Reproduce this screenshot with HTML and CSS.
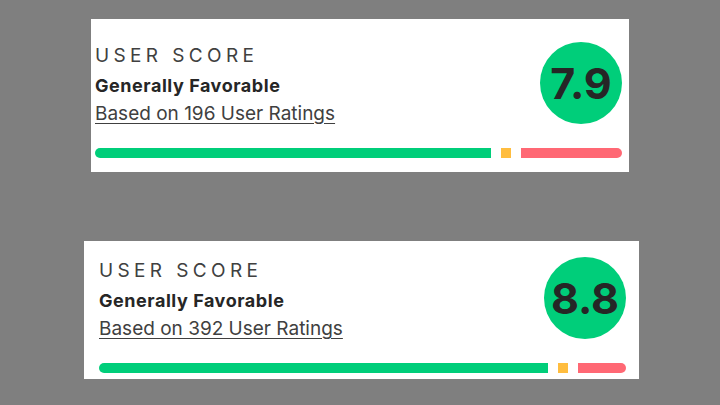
FILE: index.html
```html
<!DOCTYPE html>
<html lang="en">
<head>
  <meta charset="UTF-8">
  <title>User Score</title>
  <link rel="stylesheet" href="styles.css">
</head>
<body>

  <div class="page">
    <!-- first capture -->
    <section class="score-card score-card--first">
      <div class="score-card__top">
        <div class="score-card__info">
          <div class="score-card__label">USER SCORE</div>
          <div class="score-card__verdict">Generally Favorable</div>
          <a class="score-card__count" href="#">Based on 196 User Ratings</a>
        </div>
        <div class="score-circle">7.9</div>
      </div>
      <div class="score-bar">
        <span class="score-bar__pos" style="width: 75.1%"></span>
        <span class="score-bar__mixed"></span>
        <span class="score-bar__neg"></span>
      </div>
    </section>

    <!-- second capture -->
    <section class="score-card score-card--second">
      <div class="score-card__top">
        <div class="score-card__info">
          <div class="score-card__label">USER SCORE</div>
          <div class="score-card__verdict">Generally Favorable</div>
          <a class="score-card__count" href="#">Based on 392 User Ratings</a>
        </div>
        <div class="score-circle">8.8</div>
      </div>
      <div class="score-bar">
        <span class="score-bar__pos" style="width: 85.2%"></span>
        <span class="score-bar__mixed"></span>
        <span class="score-bar__neg"></span>
      </div>
    </section>
  </div>

</body>
</html>
```

FILE: styles.css
```css
html, body {
  margin: 0;
  height: 100%;
}
body {
  font-family: Inter, "Liberation Sans", sans-serif;
  background-color: #7f7f7f;
  color: #262626;
}
.page {
  padding-top: 19px;
}
.score-card {
  background-color: white;
  box-sizing: border-box;
}
.score-card--first {
  margin-left: 91px;
  width: 538px;
  height: 153px;
  padding: 23px 7px 0 4px;
}
.score-card--second {
  margin-top: 69px;
  margin-left: 84px;
  width: 555px;
  height: 138px;
  padding: 16px 13px 0 15px;
}
.score-card__top {
  display: flex;
  justify-content: space-between;
  align-items: flex-start;
}
.score-card__info {
  display: flex;
  flex-direction: column;
  align-items: flex-start;
  padding-top: 3px;
}
.score-card__label {
  font-size: 19px;
  line-height: 22px;
  letter-spacing: 0.23em;
  color: #404040;
}
.score-card__verdict {
  font-size: 18px;
  line-height: 22px;
  font-weight: bold;
  letter-spacing: 0.03em;
  margin-top: 8px;
}
.score-card__count {
  font-size: 19px;
  line-height: 22px;
  margin-top: 6px;
  color: #404040;
  text-decoration: underline;
  text-underline-offset: 3px;
}
.score-circle {
  width: 82px;
  height: 82px;
  border-radius: 50%;
  background-color: #00ce7a;
  display: flex;
  align-items: center;
  justify-content: center;
  font-size: 43px;
  font-weight: bold;
}
.score-bar {
  display: flex;
  gap: 10px;
  height: 10px;
  margin-top: 23px;
}
.score-bar__pos {
  background-color: #00ce7a;
  border-radius: 5px 0 0 5px;
}
.score-bar__mixed {
  width: 10px;
  background-color: #ffbd3f;
}
.score-bar__neg {
  flex: 1;
  background-color: #ff6874;
  border-radius: 0 5px 5px 0;
}
```
